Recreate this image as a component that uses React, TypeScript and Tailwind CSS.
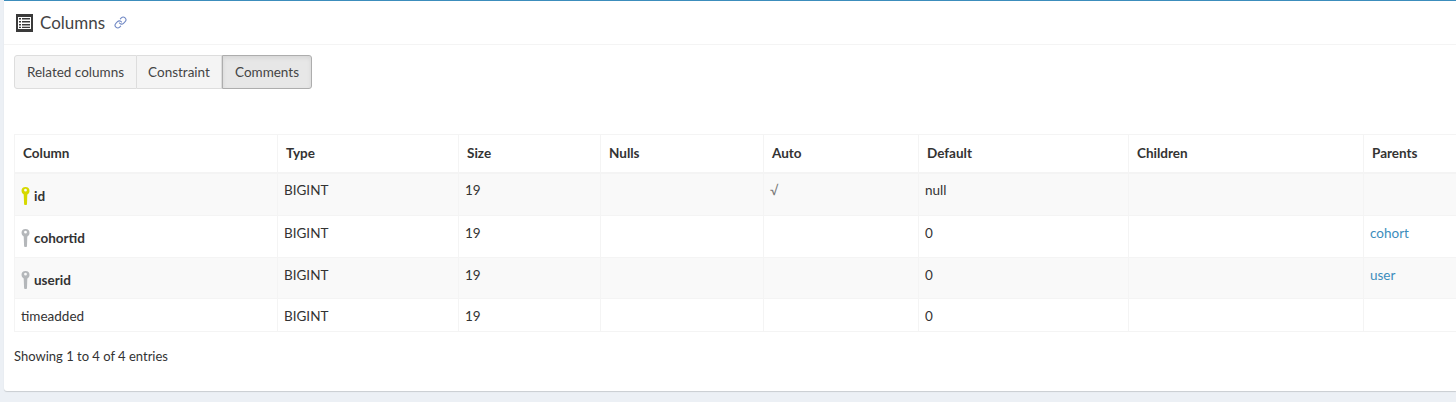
import React from 'react';
import { Link } from 'lucide-react';

const KeyIcon = ({ color }: { color: string }) => (
  <svg width="9" height="18" viewBox="0 0 9 18" className="shrink-0">
    <path
      fillRule="evenodd"
      d="M4.5 0a4 4 0 0 1 4 4c0 1.6-.9 2.9-2.2 3.5L6 17.2c0 .5-.4.8-.9.8H4c-.5 0-.8-.3-.9-.8L2.700 7.500A4 4 0 0 1 .5 4a4 4 0 0 1 4-4zm0 1.800a1.400 1.400 0 1 0 0 2.800 1.400 1.400 0 0 0 0-2.800z"
      fill={color}
    />
  </svg>
);

const TableIcon = () => (
  <svg width="17" height="18" viewBox="0 0 17 18" className="shrink-0">
    <rect x="0" y="0" width="17" height="18" fill="#3a3a3a" />
    <rect x="2" y="3" width="13" height="12" fill="#fff" />
    <path d="M3 4h2v1.500H3zM6 4h8v1.500H6zM3 7h2v1.500H3zM6 7h8v1.500H6zM3 10h2v1.500H3zM6 10h8v1.500H6zM3 12.800h2v1.200H3zM6 12.800h8v1.200H6z" fill="#3a3a3a" />
  </svg>
);

const rows = [
  { name: 'id', key: '#d6d900', auto: true, def: 'null', parent: '', h: 'h-[43px]', striped: true, pad: 'pt-[6px]' },
  { name: 'cohortid', key: '#b4b7ba', auto: false, def: '0', parent: 'cohort', h: 'h-[42px]', striped: false, pad: 'pt-[7px]' },
  { name: 'userid', key: '#b4b7ba', auto: false, def: '0', parent: 'user', h: 'h-[41px]', striped: true, pad: 'pt-[7px]' },
  { name: 'timeadded', key: '', auto: false, def: '0', parent: '', h: 'h-[33px]', striped: false, pad: 'pt-[7px]' },
];

const headers = ['Column', 'Type', 'Size', 'Nulls', 'Auto', 'Default', 'Children', 'Parents'];
const cell = 'border border-[#f4f4f4] align-top pl-[6px] leading-[20px] font-normal';

export default function App() {
  return (
    <div className="h-[402px] w-full overflow-hidden bg-[#ecf0f5] pl-1 font-['Lato',sans-serif] text-[13.500px] text-[#333]">
      <div className="h-[391px] overflow-hidden rounded-bl-[3px] border-t border-[#3c8dbc] bg-white shadow-[0_1px_1px_rgba(0,0,0,0.15)]">
        <div className="flex h-[44px] items-center gap-[7px] border-b border-[#f4f4f4] pl-3">
          <TableIcon />
          <h3 className="text-[17px] text-[#444]">Columns</h3>
          <Link size={13} className="ml-[2px] text-[#7088c4]" />
        </div>

        <div className="px-[10px] pt-[10px]">
          <div className="flex h-[34px] w-[298px] text-[#444]">
            <button className="w-[123px] rounded-l-[3px] border border-[#ddd] bg-[#f4f4f4] pt-px">Related columns</button>
            <button className="w-[85px] border-y border-r border-[#ddd] bg-[#f4f4f4] pt-px">Constraint</button>
            <button className="w-[90px] rounded-r-[3px] border border-[#adadad] bg-[#e7e7e7] pt-px shadow-[inset_0_2px_4px_rgba(0,0,0,0.08)]">Comments</button>
          </div>

          <table className="mt-[45px] w-[1560px] table-fixed border-collapse">
            <colgroup>
              <col className="w-[263px]" />
              <col className="w-[181px]" />
              <col className="w-[142px]" />
              <col className="w-[163px]" />
              <col className="w-[155px]" />
              <col className="w-[210px]" />
              <col className="w-[235px]" />
              <col className="w-[211px]" />
            </colgroup>
            <thead>
              <tr className="h-[38px]">
                {headers.map((h) => (
                  <th key={h} className="border border-b-2 border-[#f4f4f4] pl-2 text-left font-bold">
                    {h}
                  </th>
                ))}
              </tr>
            </thead>
            <tbody>
              {rows.map((r) => (
                <tr key={r.name} className={`${r.h} ${r.striped ? 'bg-[#f9f9f9]' : 'bg-white'}`}>
                  <td className={`${cell} ${r.key ? 'pt-[6px]' : r.pad}`}>
                    {r.key ? (
                      <span className="flex items-center gap-1 pt-[6px] font-bold">
                        <KeyIcon color={r.key} />
                        {r.name}
                      </span>
                    ) : (
                      r.name
                    )}
                  </td>
                  <td className={`${cell} ${r.pad}`}>BIGINT</td>
                  <td className={`${cell} ${r.pad}`}>19</td>
                  <td className={`${cell} ${r.pad}`}></td>
                  <td className={`${cell} ${r.pad}`}>{r.auto ? <span className="text-[#777]">√</span> : ''}</td>
                  <td className={`${cell} ${r.pad}`}>{r.def}</td>
                  <td className={`${cell} ${r.pad}`}></td>
                  <td className={`${cell} ${r.pad}`}>
                    {r.parent && <a className="text-[#3c8dbc]">{r.parent}</a>}
                  </td>
                </tr>
              ))}
            </tbody>
          </table>

          <div className="pt-[15px] text-[13px]">Showing 1 to 4 of 4 entries</div>
        </div>
      </div>
    </div>
  );
}
